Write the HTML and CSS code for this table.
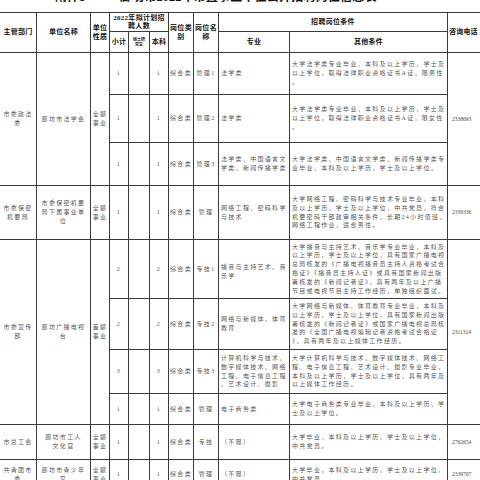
FILE: index.html
```html
<!DOCTYPE html>
<html lang="zh">
<head>
<meta charset="utf-8">
<title>岗位信息表</title>
<link rel="stylesheet" href="styles.css">
</head>
<body>
<div class="title"><div class="title-text"><span class="t1">附件1</span><span class="t2">廊坊市2022年市直事业单位公开招聘岗位信息表</span></div></div>
<div class="sheet">
  <div class="c h top r2">主管部门</div>
  <div class="c h top r2">单位名称</div>
  <div class="c h top r2">单位<br>性质</div>
  <div class="c h top c3">2022年拟计划招<br>聘人数</div>
  <div class="c h top r2">岗位类<br>别</div>
  <div class="c h top r2">岗位名<br>称</div>
  <div class="c h top c2">招聘岗位条件</div>
  <div class="c h top r2 hl">咨询电话</div>
  <div class="c h">小计</div>
  <div class="c h tiny">硕士研<br>究生</div>
  <div class="c h">本科</div>
  <div class="c h">专业</div>
  <div class="c h">其他条件</div>

  <div class="c r3">市委政法<br>委</div>
  <div class="c r3">廊坊市法学会</div>
  <div class="c r3">全额<br>事业</div>
  <div class="c">1</div><div class="c"></div><div class="c">1</div>
  <div class="c">综合类</div><div class="c">管理1</div>
  <div class="c l">法学类</div>
  <div class="c l">大学法学类专业毕业，本科及以上学历，学士及<br>以上学位，取得法律职业资格证书A证，限男性<br>。</div>
  <div class="c r3 tel">2338693</div>

  <div class="c">1</div><div class="c"></div><div class="c">1</div>
  <div class="c">综合类</div><div class="c">管理2</div>
  <div class="c l">法学类</div>
  <div class="c l">大学法学类专业毕业，本科及以上学历，学士及<br>以上学位，取得法律职业资格证书A证，限女性<br>。</div>

  <div class="c">1</div><div class="c"></div><div class="c">1</div>
  <div class="c">综合类</div><div class="c">管理3</div>
  <div class="c l">法学类、中国语言文<br>学类、新闻传播学类</div>
  <div class="c l">大学法学类、中国语言文学类、新闻传播学类专<br>业毕业，本科及以上学历，学士及以上学位。</div>

  <div class="c">市委保密<br>机要局</div>
  <div class="c">市委保密机要<br>局下属事业单<br>位</div>
  <div class="c">全额<br>事业</div>
  <div class="c">1</div><div class="c"></div><div class="c">1</div>
  <div class="c">综合类</div><div class="c">管理</div>
  <div class="c l">网络工程、密码科学<br>与技术</div>
  <div class="c l">大学网络工程、密码科学与技术专业毕业，本科<br>及以上学历，学士及以上学位，中共党员，符合<br>机要密码干部政审相关条件，长期24小时值班，<br>网络工程作业，适合男性。</div>
  <div class="c tel">2339336</div>

  <div class="c r4">市委宣传<br>部</div>
  <div class="c r4">廊坊广播电视<br>台</div>
  <div class="c r4">差额<br>事业</div>
  <div class="c">2</div><div class="c"></div><div class="c">2</div>
  <div class="c">综合类</div><div class="c">专技1</div>
  <div class="c l low">播音与主持艺术、音<br>乐学</div>
  <div class="c l">大学播音与主持艺术、音乐学专业毕业，本科及<br>以上学历，学士及以上学位，具有国家广播电视<br>总局核发的《广播电视播音员主持人资格考试合<br>格证》《播音员主持人证》或具有国家新闻出版<br>署核发的《新闻记者证》，具有两年及以上广播<br>节目或电视节目主持工作经历，单独组织面试。</div>
  <div class="c r4 tel">2311314</div>

  <div class="c">2</div><div class="c"></div><div class="c">2</div>
  <div class="c">综合类</div><div class="c">专技2</div>
  <div class="c l">网络与新媒体、体育<br>教育</div>
  <div class="c l">大学网络与新媒体、体育教育专业毕业，本科及<br>以上学历，学士及以上学位，具有国家新闻出版<br>署核发的《新闻记者证》或国家广播电视总局核<br>发的《全国广播电视编辑记者资格考试合格证<br>》，具有两年及以上媒体工作经历。</div>

  <div class="c">3</div><div class="c"></div><div class="c">3</div>
  <div class="c">综合类</div><div class="c">专技3</div>
  <div class="c l">计算机科学与技术、<br>数字媒体技术、网络<br>工程、电子信息工程<br>、艺术设计、摄影</div>
  <div class="c l">大学计算机科学与技术、数字媒体技术、网络工<br>程、电子信息工程、艺术设计、摄影专业毕业，<br>本科及以上学历，学士及以上学位，具有两年及<br>以上媒体工作经历。</div>

  <div class="c">1</div><div class="c"></div><div class="c">1</div>
  <div class="c">综合类</div><div class="c">管理</div>
  <div class="c l">电子商务类</div>
  <div class="c l">大学电子商务类专业毕业，本科及以上学历，学<br>士及以上学位。</div>

  <div class="c">市总工会</div>
  <div class="c">廊坊市工人<br>文化宫</div>
  <div class="c">全额<br>事业</div>
  <div class="c">1</div><div class="c"></div><div class="c">1</div>
  <div class="c">综合类</div><div class="c">专技</div>
  <div class="c l">（不限）</div>
  <div class="c l">大学毕业，本科及以上学历，学士及以上学位，<br>中共党员。</div>
  <div class="c tel">2762654</div>

  <div class="c">共青团市<br>委</div>
  <div class="c">廊坊市青少年<br>宫</div>
  <div class="c">全额<br>事业</div>
  <div class="c">1</div><div class="c"></div><div class="c">1</div>
  <div class="c">综合类</div><div class="c">管理</div>
  <div class="c l">（不限）</div>
  <div class="c l">大学毕业，本科及以上学历，学士及以上学位，<br>中共党员。</div>
  <div class="c tel">2339707</div>
</div>
</body>
</html>
```
FILE: styles.css
```css
html, body {
  margin: 0;
  padding: 0;
  background: #ffffff;
  overflow: hidden;
}
body {
  width: 480px;
  height: 480px;
  font-family: "Liberation Serif", "Noto Sans CJK SC", serif;
  color: #555555;
}
.title {
  height: 12px;
  overflow: hidden;
}
.title-text {
  margin-top: -10px;
  line-height: 14px;
  font-size: 12px;
  font-weight: bold;
  color: #111111;
  white-space: nowrap;
  display: flex;
}
.t1 {
  margin-left: 55px;
  width: 65px;
}
.t2 {
  letter-spacing: 0.2px;
}
.sheet {
  display: grid;
  grid-template-columns: 37px 54px 19px 19px 21px 19px 25px 25px 71px 158px 33px;
  grid-template-rows: 20px 21px 42px 48px 43px 54px 59px 51px 44px 31px 35px 30px;
}
.c {
  box-sizing: border-box;
  border-right: 1px solid #3a3a3a;
  border-bottom: 1px solid #3a3a3a;
  display: flex;
  align-items: center;
  justify-content: center;
  text-align: center;
  white-space: nowrap;
  overflow: hidden;
  font-size: 6px;
  letter-spacing: 1.3px;
  line-height: 8.8px;
}
.top {
  border-top: 1px solid #3a3a3a;
}
.h {
  font-weight: bold;
  color: #111111;
  font-size: 7px;
  letter-spacing: 0.3px;
  line-height: 8.5px;
}
.hl {
  justify-content: flex-start;
  padding-left: 1px;
  letter-spacing: 0.2px;
}
.tiny {
  font-size: 4px;
  line-height: 5px;
  letter-spacing: 0;
}
.l {
  justify-content: flex-start;
  text-align: left;
  padding-left: 2px;
}
.low {
  padding-top: 6px;
}
.tel {
  font-size: 5.5px;
  letter-spacing: 0;
  color: #444444;
  justify-content: flex-start;
  padding-left: 4px;
}
.r2 { grid-row: span 2; }
.r3 { grid-row: span 3; }
.r4 { grid-row: span 4; }
.c2 { grid-column: span 2; }
.c3 { grid-column: span 3; }
```
